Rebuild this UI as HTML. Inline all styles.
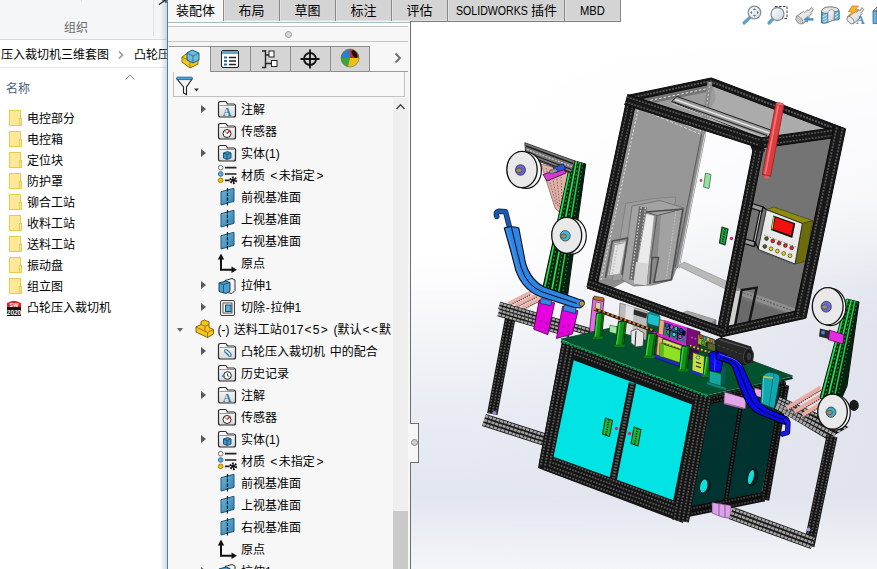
<!DOCTYPE html>
<html lang="zh-CN">
<head>
<meta charset="utf-8">
<title>SolidWorks</title>
<style>
html,body{margin:0;padding:0;}
body{width:877px;height:569px;overflow:hidden;position:relative;background:#fff;font-family:"Liberation Sans","Noto Sans CJK SC",sans-serif;font-size:12px;color:#000;}
.abs{position:absolute;}
#explorer{left:0;top:0;width:167px;height:569px;background:#fff;overflow:hidden;}
#ribbon{left:0;top:0;width:167px;height:39px;background:#f5f6f7;border-bottom:1px solid #dadbdc;}
.vline{width:1px;background:#e2e3e4;top:0;height:36px;}
#addr{left:0;top:40px;width:167px;height:27px;background:#fff;border-bottom:1px solid #e5e5e5;white-space:nowrap;}
.fi{left:7px;height:21px;line-height:21px;white-space:nowrap;font-size:12px;}
.fold{position:absolute;left:2px;top:1px;width:12px;height:16px;background:#ffe896;border:1px solid #e9c94e;box-sizing:border-box;}
.fold:after{content:"";position:absolute;right:-2px;bottom:-1px;width:3px;height:8px;background:#ffe896;border:1px solid #e9c94e;box-sizing:border-box;}
.fi span{position:absolute;left:20px;top:0;}
#sw{left:0;top:0;width:877px;height:569px;overflow:hidden;}
.tab{top:0;height:22px;line-height:21px;font-size:13px;text-align:center;background:#d4d4d4;border-right:1px solid #888;border-bottom:1px solid #7e7e7e;box-sizing:border-box;white-space:nowrap;box-shadow:inset 1px 0 0 #e2e2e2,inset 0 -1px 0 #e0e0e0;}
.tr{position:absolute;left:0;height:22px;line-height:22px;white-space:nowrap;font-size:12px;word-spacing:1.5px;}
.tr .t{position:absolute;top:0;}
.arr{position:absolute;width:0;height:0;border-left:5px solid #5a5a5a;border-top:4px solid transparent;border-bottom:4px solid transparent;top:6px;}
.ic{position:absolute;left:49px;top:1px;overflow:visible;}
.arrd{position:absolute;width:0;height:0;border-top:4px solid #666;border-left:3.5px solid transparent;border-right:3.5px solid transparent;top:9px;}
</style>
</head>
<body>
<!-- ============ Explorer (left) ============ -->
<div id="explorer" class="abs">
  <div id="ribbon" class="abs"></div>
  <div class="abs vline" style="left:81px;height:2px"></div>
  <div class="abs vline" style="left:153px"></div>
  <div class="abs" style="left:64px;top:19px;font-size:12px;color:#6a6a6a;line-height:18px;">组织</div>
  <div id="addr" class="abs"><span class="abs" style="left:1px;top:6px;line-height:18px;">压入裁切机三维套图</span><svg class="abs" style="left:117px;top:10px" width="8" height="10"><path d="M2 1.500 L5.500 5 L2 8.500" fill="none" stroke="#8a8a8a" stroke-width="1.300"/></svg><span class="abs" style="left:134px;top:6px;line-height:18px;">凸轮压入</span></div>
  <div class="abs" style="left:6px;top:80px;color:#4c607a;line-height:18px;">名称</div>
  <svg class="abs" style="left:124px;top:73px" width="12" height="8"><path d="M1.5 6.5 L6 2 L10.5 6.5" fill="none" stroke="#8a8a8a" stroke-width="1"/></svg>
  <div class="abs fi" style="top:109px"><i class="fold"></i><span>电控部分</span></div>
  <div class="abs fi" style="top:130px"><i class="fold"></i><span>电控箱</span></div>
  <div class="abs fi" style="top:151px"><i class="fold"></i><span>定位块</span></div>
  <div class="abs fi" style="top:172px"><i class="fold"></i><span>防护罩</span></div>
  <div class="abs fi" style="top:193px"><i class="fold"></i><span>铆合工站</span></div>
  <div class="abs fi" style="top:214px"><i class="fold"></i><span>收料工站</span></div>
  <div class="abs fi" style="top:235px"><i class="fold"></i><span>送料工站</span></div>
  <div class="abs fi" style="top:256px"><i class="fold"></i><span>振动盘</span></div>
  <div class="abs fi" style="top:277px"><i class="fold"></i><span>组立图</span></div>
  <div class="abs fi" style="top:298px"><svg class="abs" style="left:-1px;top:2px" width="16" height="17"><rect x="1" y="7" width="14" height="9" fill="#111"/><path d="M1 7 L1 3 L6 1 L10 1 L15 3 L15 7Z" fill="#d8232a"/><text x="8" y="15" font-size="6.5" font-weight="bold" fill="#fff" text-anchor="middle" font-family="Liberation Sans,sans-serif">2020</text><text x="8" y="7" font-size="5.5" font-weight="bold" fill="#fff" text-anchor="middle" font-family="Liberation Sans,sans-serif">SW</text></svg><span>凸轮压入裁切机</span></div>
</div>
<!-- ============ SolidWorks window ============ -->
<div class="abs" style="left:160px;top:0;width:7px;height:569px;background:linear-gradient(90deg,rgba(200,200,200,0),rgba(170,170,170,.45));"></div>
<div id="sw" class="abs">
<svg width="0" height="0" style="position:absolute">
<defs>
<linearGradient id="gF" x1="0" y1="0" x2="0" y2="1"><stop offset="0" stop-color="#fdfdfd"/><stop offset="1" stop-color="#d9d9d9"/></linearGradient>
<linearGradient id="gB" x1="0" y1="0" x2="1" y2="1"><stop offset="0" stop-color="#6fb7dc"/><stop offset="1" stop-color="#2f7fae"/></linearGradient>
<g id="iFold"><path d="M1.5 3.5 Q1.5 1.5 3.5 1.5 L8 1.5 Q9.5 1.5 10 3 L10.3 4 L16.5 4 Q18.5 4 18.5 6 L18.5 15 Q18.5 17 16.5 17 L3.5 17 Q1.5 17 1.5 15 Z" fill="url(#gF)" stroke="#2c2c2c" stroke-width="1.2"/><path d="M2.5 5.5 L17.5 5.5" stroke="#9a9a9a" stroke-width="1" fill="none"/></g>
<g id="iPlane"><path d="M3 3.700 L16 0.300 L16 13.300 L3 17 Z" fill="url(#gB)" stroke="#1c5478" stroke-width="1"/><path d="M9.400 0 L9.400 18.500" stroke="#111" stroke-width="1.100" stroke-dasharray="3.500 1.200"/></g>
<g id="iOrigin"><path d="M4 3 L4 16.800 L16 16.800" fill="none" stroke="#111" stroke-width="2"/><path d="M0.800 6.500 L4 0.500 L7.200 6.500 Z" fill="#111"/><path d="M14.500 13.500 L20 16.800 L14.500 20 Z" fill="#111"/></g>
<g id="iMat"><circle cx="3.5" cy="3.5" r="2.2" fill="#fff" stroke="#666" stroke-width=".9"/><circle cx="3.5" cy="9.5" r="2.2" fill="#5db0e6" stroke="#2a6a9a" stroke-width=".9"/><circle cx="3.5" cy="15.5" r="2.2" fill="#f5c400" stroke="#a07800" stroke-width=".9"/><path d="M7.5 3.5 L18.5 3.5 M7.5 9.5 L18.5 9.5 M7.5 15.5 L12 15.5" stroke="#222" stroke-width="1.6"/><circle cx="15.5" cy="15.5" r="2.6" fill="none" stroke="#111" stroke-width="2.2" stroke-dasharray="1.6 1.1"/><circle cx="15.5" cy="15.5" r="1.7" fill="#111"/></g>
</defs></svg>
<!-- viewport -->
<div class="abs" id="vp" style="left:168px;top:0;width:709px;height:569px;background:linear-gradient(0deg,rgba(244,245,249,1) 0%,rgba(244,245,249,0) 13%),linear-gradient(180deg,rgba(255,255,255,1) 5%,rgba(255,255,255,.74) 35%,rgba(255,255,255,.12) 51%,rgba(255,255,255,0) 58%),linear-gradient(90deg,rgba(225,228,237,0) 42%,rgba(225,228,237,1) 100%),linear-gradient(180deg,#ffffff 0%,#ffffff 45%,#f4f5f9 59%,#e9ecf3 72%,#e2e6ef 87%,#e2e6ef 100%);"></div>
<svg class="abs" style="left:0;top:0" width="877" height="569" viewBox="0 0 877 569">
<line x1="508.5" y1="304" x2="531" y2="292.3" stroke="#e8b2aa" stroke-width="4.2" />
<line x1="508.5" y1="306.2" x2="531" y2="294.5" stroke="#5a3a36" stroke-width="1.1" stroke-dasharray="1.3 1"/>
<line x1="515.3" y1="306" x2="537.8" y2="294.3" stroke="#e8b2aa" stroke-width="4.2" />
<line x1="515.3" y1="308.2" x2="537.8" y2="296.5" stroke="#5a3a36" stroke-width="1.1" stroke-dasharray="1.3 1"/>
<line x1="522.1" y1="308" x2="544.6" y2="296.3" stroke="#e8b2aa" stroke-width="4.2" />
<line x1="522.1" y1="310.2" x2="544.6" y2="298.5" stroke="#5a3a36" stroke-width="1.1" stroke-dasharray="1.3 1"/>
<polygon points="541,164 569,171 561,214 555,208" fill="#e0b0aa" stroke="#6a4a46" stroke-width="0.6" stroke-linejoin="round" />
<line x1="546" y1="168" x2="556" y2="204" stroke="#7a4a46" stroke-width="0.8" stroke-dasharray="1.5 1.5"/>
<line x1="551" y1="169" x2="558" y2="206" stroke="#7a4a46" stroke-width="0.8" stroke-dasharray="1.5 1.5"/>
<line x1="556" y1="170" x2="560" y2="208" stroke="#7a4a46" stroke-width="0.8" stroke-dasharray="1.5 1.5"/>
<line x1="561" y1="171" x2="562" y2="210" stroke="#7a4a46" stroke-width="0.8" stroke-dasharray="1.5 1.5"/>
<polygon points="571,160 585.7,164 570,277 567,300 541,296" fill="#08200e" stroke="#041008" stroke-width="1" stroke-linejoin="round" />
<line x1="572" y1="160.3" x2="542.8" y2="296.3" stroke="#25e254" stroke-width="1.7" />
<line x1="573.9" y1="160.8" x2="546.2" y2="296.8" stroke="#1a9a3a" stroke-width="1.3" stroke-dasharray="2 2"/>
<line x1="576.3" y1="161.4" x2="550.4" y2="297.4" stroke="#25e254" stroke-width="1.7" />
<line x1="578.4" y1="162" x2="554" y2="298" stroke="#1a9a3a" stroke-width="1.3" stroke-dasharray="2 2"/>
<line x1="580.4" y1="162.6" x2="557.6" y2="298.6" stroke="#22d04c" stroke-width="1.5" />
<line x1="582.8" y1="163.2" x2="561.8" y2="299.2" stroke="#1a8a6a" stroke-width="1.1" stroke-dasharray="1.5 2.5"/>
<polygon points="524.8,142.7 575,161 571,173.5 526,156.5" fill="#787878" stroke="#222" stroke-width="0.8" stroke-linejoin="round" />
<line x1="526" y1="146" x2="573" y2="163.5" stroke="#1e1e1e" stroke-width="1.4" />
<line x1="527" y1="149.5" x2="572" y2="166.5" stroke="#c8c8c8" stroke-width="1.2" stroke-dasharray="2 1.3"/>
<line x1="527" y1="152.5" x2="571.5" y2="169.5" stroke="#1e1e1e" stroke-width="1.2" />
<line x1="527" y1="155.5" x2="571" y2="172.5" stroke="#1e1e1e" stroke-width="1.2" />
<polygon points="543,174.5 563,168 566,173 547,181" fill="#d63ad0" stroke="#3a0a3a" stroke-width="0.8" stroke-linejoin="round" />
<polygon points="553,167.5 563,164 566,169 556,172.5" fill="#3050d0" stroke="#111" stroke-width="0.6" stroke-linejoin="round" />
<polygon points="549,171 556,168.5 557.5,171.5 550.5,174" fill="#9a9a9a" stroke="#222" stroke-width="0.5" stroke-linejoin="round" />
<ellipse cx="526.2" cy="170.3" rx="15.2" ry="18.2" fill="#f7f7f7" stroke="#111" stroke-width="1.2" />
<ellipse cx="522" cy="169.5" rx="15.2" ry="18.2" fill="#e9e9e9" stroke="#111" stroke-width="1.3" />
<ellipse cx="520.5" cy="170" rx="5" ry="5.3" fill="#6464da" stroke="#333" stroke-width="0.8" />
<ellipse cx="519" cy="170.3" rx="3" ry="2.2" fill="#9a8a7a" stroke="#333" stroke-width="0.5" />
<ellipse cx="571.3" cy="236.1" rx="15" ry="18" fill="#f7f7f7" stroke="#111" stroke-width="1.2" />
<ellipse cx="566.7" cy="235.3" rx="15" ry="18" fill="#e9e9e9" stroke="#111" stroke-width="1.3" />
<ellipse cx="565.2" cy="235.8" rx="5" ry="5.2" fill="#3cc0d2" stroke="#333" stroke-width="0.8" />
<ellipse cx="563.7" cy="236.1" rx="3" ry="2.2" fill="#9a8a7a" stroke="#333" stroke-width="0.5" />
<line x1="484" y1="420" x2="546" y2="440" stroke="#1c1c1c" stroke-width="12.5" stroke-linecap="butt"/>
<line x1="485.3" y1="416" x2="547.3" y2="436" stroke="#a4a4a4" stroke-width="2.380952380952381" stroke-dasharray="3.2 0.7" opacity="1"/>
<line x1="484" y1="420" x2="546" y2="440" stroke="#a4a4a4" stroke-width="2.380952380952381" stroke-dasharray="3.2 0.7" opacity="1"/>
<line x1="482.7" y1="424" x2="544.7" y2="444" stroke="#a4a4a4" stroke-width="2.380952380952381" stroke-dasharray="3.2 0.7" opacity="1"/>
<line x1="510.3" y1="318" x2="492.3" y2="414" stroke="#141414" stroke-width="10.5" stroke-linecap="butt"/>
<line x1="513.7" y1="318.6" x2="495.7" y2="414.6" stroke="#585858" stroke-width="1.5909090909090908" stroke-dasharray="1.7 1.3" opacity="1"/>
<line x1="510.3" y1="318" x2="492.3" y2="414" stroke="#585858" stroke-width="1.5909090909090908" stroke-dasharray="1.7 1.3" opacity="1"/>
<line x1="506.9" y1="317.4" x2="488.9" y2="413.4" stroke="#585858" stroke-width="1.5909090909090908" stroke-dasharray="1.7 1.3" opacity="1"/>
<ellipse cx="494.5" cy="413" rx="2" ry="2" fill="#8a8ad8" />
<line x1="499.3" y1="305.3" x2="590" y2="332" stroke="#1c1c1c" stroke-width="7.6" stroke-linecap="butt"/>
<line x1="499.8" y1="303.5" x2="590.5" y2="330.2" stroke="#a4a4a4" stroke-width="2.1714285714285713" stroke-dasharray="3.2 0.7" opacity="1"/>
<line x1="498.8" y1="307.1" x2="589.5" y2="333.8" stroke="#a4a4a4" stroke-width="2.1714285714285713" stroke-dasharray="3.2 0.7" opacity="1"/>
<line x1="498.5" y1="312.6" x2="570" y2="333.7" stroke="#1c1c1c" stroke-width="7.6" stroke-linecap="butt"/>
<line x1="499" y1="310.8" x2="570.5" y2="331.9" stroke="#a4a4a4" stroke-width="2.1714285714285713" stroke-dasharray="3.2 0.7" opacity="1"/>
<line x1="498" y1="314.4" x2="569.5" y2="335.5" stroke="#a4a4a4" stroke-width="2.1714285714285713" stroke-dasharray="3.2 0.7" opacity="1"/>
<path d="M496.8 216.5 Q495 211.8 499 211.3 L505.6 211.8 L509.8 228.5" fill="none" stroke="#0d2f6a" stroke-width="5.4" stroke-linecap="round" stroke-linejoin="round"/>
<path d="M496.8 216.5 Q495 211.8 499 211.3 L505.6 211.8 L509.8 228.5" fill="none" stroke="#1f58a8" stroke-width="3.6" stroke-linecap="round" stroke-linejoin="round"/>
<path d="M504.3 228 L510.5 250 L516 271 Q519 279 523.4 284.4 Q527 289 532 292.4 Q536 295 540.6 296.7 L573.8 307.2 L580 308 Q586 305 583.5 300.5 L578.7 299.2 L544.3 286.9 Q540 285 536.9 282 Q533 278.5 530.7 274.6 Q527.3 269.5 525.6 263.5 L523 250 L518.8 228 Q511.5 225.5 504.3 228 Z" fill="#2d86e6" stroke="#0a0a18" stroke-width="1.1" stroke-linejoin="round"/>
<path d="M511.5 227.5 L516.8 250 L521 267 Q524 277 529.5 283 Q534.5 288.5 542 291.8 L577 303.5" fill="none" stroke="#0a0a18" stroke-width="1" />
<path d="M506.5 229 L512.5 250 L518 271 Q521 279 525 284" fill="none" stroke="#4a9af0" stroke-width="1" />
<ellipse cx="581.8" cy="303.6" rx="2.6" ry="2.6" fill="#b89a3a" stroke="#3a2a00" stroke-width="0.7" />
<polygon points="539.2,300.3 554.6,302.8 547.8,334.7 533.7,329.2" fill="#e600e0" stroke="#3a003a" stroke-width="0.8" stroke-linejoin="round" />
<polygon points="562.6,306.4 578,310.8 572.4,334 556.4,338.4" fill="#e600e0" stroke="#3a003a" stroke-width="0.8" stroke-linejoin="round" />
<polygon points="541,298.5 551.5,300.5 551,305.5 540,303.5" fill="#3a86e0" stroke="#0d2a66" stroke-width="0.7" stroke-linejoin="round" />
<polygon points="564,305 576,308 575.5,313.5 563,310.5" fill="#3a86e0" stroke="#0d2a66" stroke-width="0.7" stroke-linejoin="round" />
<ellipse cx="540.5" cy="321" rx="0.9" ry="0.9" fill="#7a007a" />
<ellipse cx="546.5" cy="323" rx="0.9" ry="0.9" fill="#7a007a" />
<ellipse cx="539.5" cy="327.5" rx="0.9" ry="0.9" fill="#7a007a" />
<ellipse cx="545.5" cy="329.5" rx="0.9" ry="0.9" fill="#7a007a" />
<ellipse cx="563" cy="327" rx="0.9" ry="0.9" fill="#7a007a" />
<ellipse cx="569" cy="325.5" rx="0.9" ry="0.9" fill="#7a007a" />
<ellipse cx="562" cy="333" rx="0.9" ry="0.9" fill="#7a007a" />
<ellipse cx="568" cy="331.5" rx="0.9" ry="0.9" fill="#7a007a" />
<polygon points="705,398 785,381 772,440 762,492 690,507" fill="#013431" />
<line x1="685" y1="512.5" x2="764" y2="496.5" stroke="#0e0e0e" stroke-width="10" stroke-linecap="butt"/>
<line x1="684.5" y1="510" x2="763.5" y2="494" stroke="#3c3c3c" stroke-width="1.923076923076923" stroke-dasharray="1.7 1.3" opacity="1"/>
<line x1="685.5" y1="515" x2="764.5" y2="499" stroke="#3c3c3c" stroke-width="1.923076923076923" stroke-dasharray="1.7 1.3" opacity="1"/>
<line x1="785" y1="385" x2="765" y2="500" stroke="#0e0e0e" stroke-width="8.5" stroke-linecap="butt"/>
<line x1="787.1" y1="385.4" x2="767.1" y2="500.4" stroke="#3c3c3c" stroke-width="1.6346153846153846" stroke-dasharray="1.7 1.3" opacity="1"/>
<line x1="782.9" y1="384.6" x2="762.9" y2="499.6" stroke="#3c3c3c" stroke-width="1.6346153846153846" stroke-dasharray="1.7 1.3" opacity="1"/>
<line x1="741" y1="404" x2="726" y2="500" stroke="#0e0e0e" stroke-width="4.5" stroke-linecap="butt"/>
<line x1="741" y1="404" x2="726" y2="500" stroke="#3c3c3c" stroke-width="1.7307692307692306" stroke-dasharray="1.7 1.3" opacity="1"/>
<line x1="708" y1="401" x2="786" y2="384" stroke="#0e0e0e" stroke-width="7" stroke-linecap="butt"/>
<line x1="707.6" y1="399.3" x2="785.6" y2="382.3" stroke="#3c3c3c" stroke-width="1.346153846153846" stroke-dasharray="1.7 1.3" opacity="1"/>
<line x1="708.4" y1="402.7" x2="786.4" y2="385.7" stroke="#3c3c3c" stroke-width="1.346153846153846" stroke-dasharray="1.7 1.3" opacity="1"/>
<ellipse cx="705" cy="486" rx="5.2" ry="7.8" fill="#062222" stroke="#041818" stroke-width="0.8" transform="rotate(12 705 486.0)" />
<ellipse cx="703.8" cy="486" rx="3.6" ry="6.6" fill="#14dcdc" transform="rotate(12 703.8 486.0)" />
<ellipse cx="752.6" cy="477.3" rx="5" ry="8.8" fill="#062222" stroke="#041818" stroke-width="0.8" transform="rotate(14 752.6 477.3)" />
<ellipse cx="751" cy="477" rx="2.6" ry="7.2" fill="#14dcdc" transform="rotate(14 751 477.0)" />
<polygon points="562,341 711,396 683,523 538,468" fill="#161616" />
<polygon points="573.7,360.3 692,404.5 673,501.5 553,458.5" fill="#02e4e4" />
<line x1="632.5" y1="383" x2="613" y2="480" stroke="#141414" stroke-width="7.5" stroke-linecap="butt"/>
<line x1="632.5" y1="383" x2="613" y2="480" stroke="#585858" stroke-width="3.4090909090909087" stroke-dasharray="1.7 1.3" opacity="1"/>
<polygon points="605.5,418 612.5,420.5 609.5,436.5 602.5,434" fill="#22b43a" stroke="#083a12" stroke-width="1.1" stroke-linejoin="round" />
<polygon points="634,427 641,429.5 638,446 631,443.5" fill="#22b43a" stroke="#083a12" stroke-width="1.1" stroke-linejoin="round" />
<line x1="609" y1="419.5" x2="606" y2="435" stroke="#083a12" stroke-width="1.6" stroke-dasharray="1.2 1.2"/>
<line x1="637.5" y1="428.5" x2="634.5" y2="444.5" stroke="#083a12" stroke-width="1.6" stroke-dasharray="1.2 1.2"/>
<ellipse cx="616.5" cy="428.5" rx="1.7" ry="1.7" fill="#e8205a" />
<ellipse cx="629.5" cy="433.5" rx="1.7" ry="1.7" fill="#e8205a" />
<line x1="567" y1="347.5" x2="702" y2="398" stroke="#141414" stroke-width="11" stroke-linecap="butt"/>
<line x1="568.3" y1="344.1" x2="703.3" y2="394.6" stroke="#585858" stroke-width="1.6666666666666665" stroke-dasharray="1.7 1.3" opacity="1"/>
<line x1="567" y1="347.5" x2="702" y2="398" stroke="#585858" stroke-width="1.6666666666666665" stroke-dasharray="1.7 1.3" opacity="1"/>
<line x1="565.7" y1="350.9" x2="700.7" y2="401.4" stroke="#585858" stroke-width="1.6666666666666665" stroke-dasharray="1.7 1.3" opacity="1"/>
<line x1="546" y1="462.5" x2="681" y2="511.5" stroke="#141414" stroke-width="16" stroke-linecap="butt"/>
<line x1="548" y1="456.9" x2="683" y2="505.9" stroke="#585858" stroke-width="1.8181818181818181" stroke-dasharray="1.7 1.3" opacity="1"/>
<line x1="546.7" y1="460.6" x2="681.7" y2="509.6" stroke="#585858" stroke-width="1.8181818181818181" stroke-dasharray="1.7 1.3" opacity="1"/>
<line x1="545.3" y1="464.4" x2="680.3" y2="513.4" stroke="#585858" stroke-width="1.8181818181818181" stroke-dasharray="1.7 1.3" opacity="1"/>
<line x1="544" y1="468.1" x2="679" y2="517.1" stroke="#585858" stroke-width="1.8181818181818181" stroke-dasharray="1.7 1.3" opacity="1"/>
<line x1="568.5" y1="343" x2="545" y2="466" stroke="#141414" stroke-width="13" stroke-linecap="butt"/>
<line x1="572.8" y1="343.8" x2="549.3" y2="466.8" stroke="#585858" stroke-width="1.9696969696969695" stroke-dasharray="1.7 1.3" opacity="1"/>
<line x1="568.5" y1="343" x2="545" y2="466" stroke="#585858" stroke-width="1.9696969696969695" stroke-dasharray="1.7 1.3" opacity="1"/>
<line x1="564.2" y1="342.2" x2="540.7" y2="465.2" stroke="#585858" stroke-width="1.9696969696969695" stroke-dasharray="1.7 1.3" opacity="1"/>
<line x1="703.5" y1="396" x2="680.5" y2="521" stroke="#141414" stroke-width="17" stroke-linecap="butt"/>
<line x1="709.8" y1="397.2" x2="686.8" y2="522.2" stroke="#585858" stroke-width="1.9318181818181817" stroke-dasharray="1.7 1.3" opacity="1"/>
<line x1="705.6" y1="396.4" x2="682.6" y2="521.4" stroke="#585858" stroke-width="1.9318181818181817" stroke-dasharray="1.7 1.3" opacity="1"/>
<line x1="701.4" y1="395.6" x2="678.4" y2="520.6" stroke="#585858" stroke-width="1.9318181818181817" stroke-dasharray="1.7 1.3" opacity="1"/>
<line x1="697.2" y1="394.8" x2="674.2" y2="519.8" stroke="#585858" stroke-width="1.9318181818181817" stroke-dasharray="1.7 1.3" opacity="1"/>
<polygon points="725,393 745,399 744,409 724,404" fill="#e3a6e6" stroke="#6a3a6a" stroke-width="0.6" stroke-linejoin="round" />
<polygon points="712,502.5 731,505.5 731,518.5 722,517 712,513" fill="#dca2e8" stroke="#5a2a5a" stroke-width="0.6" stroke-linejoin="round" />
<line x1="719" y1="503.5" x2="719" y2="516" stroke="#8a5a9a" stroke-width="1" />
<line x1="725" y1="504.5" x2="725" y2="517.5" stroke="#8a5a9a" stroke-width="1" />
<polygon points="779.5,396.6 848.4,426.9 827.3,439.5 775.3,408.6" fill="#1a1a1a" />
<line x1="779" y1="398.2" x2="845.7" y2="428.5" stroke="#a4a4a4" stroke-width="2.108" stroke-dasharray="3.2 0.7"/>
<line x1="777.9" y1="401.2" x2="840.4" y2="431.7" stroke="#a4a4a4" stroke-width="2.508" stroke-dasharray="3.2 0.7"/>
<line x1="776.9" y1="404.2" x2="835.1" y2="434.8" stroke="#a4a4a4" stroke-width="2.908" stroke-dasharray="3.2 0.7"/>
<line x1="775.8" y1="407" x2="830" y2="437.9" stroke="#a4a4a4" stroke-width="3.292" stroke-dasharray="3.2 0.7"/>
<line x1="787" y1="408.3" x2="821" y2="387.8" stroke="#e8aca4" stroke-width="4.6" />
<line x1="787" y1="410.7" x2="821" y2="390.2" stroke="#5a3a36" stroke-width="1.2" stroke-dasharray="1.3 1"/>
<line x1="794.5" y1="412" x2="824" y2="394" stroke="#e8aca4" stroke-width="4.6" />
<line x1="794.5" y1="414.4" x2="824" y2="396.4" stroke="#5a3a36" stroke-width="1.2" stroke-dasharray="1.3 1"/>
<line x1="802.5" y1="415.3" x2="826.5" y2="400.6" stroke="#e8aca4" stroke-width="4.6" />
<line x1="802.5" y1="417.7" x2="826.5" y2="403" stroke="#5a3a36" stroke-width="1.2" stroke-dasharray="1.3 1"/>
<line x1="832" y1="436" x2="809" y2="546" stroke="#141414" stroke-width="11" stroke-linecap="butt"/>
<line x1="835.6" y1="436.8" x2="812.6" y2="546.8" stroke="#585858" stroke-width="1.6666666666666665" stroke-dasharray="1.7 1.3" opacity="1"/>
<line x1="832" y1="436" x2="809" y2="546" stroke="#585858" stroke-width="1.6666666666666665" stroke-dasharray="1.7 1.3" opacity="1"/>
<line x1="828.4" y1="435.2" x2="805.4" y2="545.2" stroke="#585858" stroke-width="1.6666666666666665" stroke-dasharray="1.7 1.3" opacity="1"/>
<line x1="731" y1="513" x2="813" y2="543" stroke="#1c1c1c" stroke-width="13" stroke-linecap="butt"/>
<line x1="732.5" y1="508.9" x2="814.5" y2="538.9" stroke="#a4a4a4" stroke-width="2.4761904761904763" stroke-dasharray="3.2 0.7" opacity="1"/>
<line x1="731" y1="513" x2="813" y2="543" stroke="#a4a4a4" stroke-width="2.4761904761904763" stroke-dasharray="3.2 0.7" opacity="1"/>
<line x1="729.5" y1="517.1" x2="811.5" y2="547.1" stroke="#a4a4a4" stroke-width="2.4761904761904763" stroke-dasharray="3.2 0.7" opacity="1"/>
<ellipse cx="808.5" cy="529.5" rx="2" ry="2" fill="#9a9ae0" />
<polygon points="846.5,299 859,302 847,386 840,402 820,398" fill="#08200e" stroke="#041008" stroke-width="1" stroke-linejoin="round" />
<line x1="847.5" y1="299.2" x2="821.6" y2="398.3" stroke="#25e254" stroke-width="1.7" />
<line x1="849.2" y1="299.7" x2="824.4" y2="398.9" stroke="#1a9a3a" stroke-width="1.3" stroke-dasharray="2 2"/>
<line x1="851.2" y1="300.1" x2="827.6" y2="399.5" stroke="#25e254" stroke-width="1.7" />
<line x1="853.1" y1="300.6" x2="830.6" y2="400.1" stroke="#1a9a3a" stroke-width="1.3" stroke-dasharray="2 2"/>
<line x1="855" y1="301" x2="833.6" y2="400.7" stroke="#22d04c" stroke-width="1.5" />
<line x1="857.1" y1="301.6" x2="837" y2="401.4" stroke="#1a8a6a" stroke-width="1.1" stroke-dasharray="1.5 2.5"/>
<polygon points="829,330 844,334.5 843,344 828,339.5" fill="#e62ae0" stroke="#4a004a" stroke-width="0.7" stroke-linejoin="round" />
<polygon points="820,328.5 830,331 829,339 819,336.5" fill="#2a2a2a" />
<ellipse cx="823" cy="332.5" rx="2" ry="2" fill="#4a7ae0" />
<ellipse cx="830.5" cy="307" rx="15.4" ry="18.6" fill="#f7f7f7" stroke="#111" stroke-width="1.2" />
<ellipse cx="827.7" cy="306.2" rx="15.4" ry="18.6" fill="#e9e9e9" stroke="#111" stroke-width="1.3" />
<ellipse cx="826.2" cy="306.7" rx="5.1" ry="5.4" fill="#6a6ae0" stroke="#333" stroke-width="0.8" />
<ellipse cx="824.7" cy="307" rx="3.1" ry="2.2" fill="#9a8a7a" stroke="#333" stroke-width="0.5" />
<ellipse cx="854" cy="405.4" rx="4.8" ry="5.6" fill="#1a1a1a" />
<ellipse cx="835.5" cy="412.5" rx="14.8" ry="17.5" fill="#f7f7f7" stroke="#111" stroke-width="1.2" />
<ellipse cx="832.5" cy="411.7" rx="14.8" ry="17.5" fill="#e9e9e9" stroke="#111" stroke-width="1.3" />
<ellipse cx="831" cy="412.2" rx="4.9" ry="5.1" fill="#38b0c8" stroke="#333" stroke-width="0.8" />
<ellipse cx="829.5" cy="412.5" rx="3" ry="2.1" fill="#9a8a7a" stroke="#333" stroke-width="0.5" />
<polygon points="561,339 708,394.5 792.5,376 645,320.5" fill="#01522e" stroke="#083a22" stroke-width="0.8" stroke-linejoin="round" />
<path d="M708 396.300 L792.500 377.800" fill="none" stroke="#02301c" stroke-width="2.4" />
<path d="M561 340.800 L708 396.300" fill="none" stroke="#0a9a54" stroke-width="2.4" />
<path d="M561 341.600 L708 397.100" fill="none" stroke="#03140c" stroke-width="1.2" stroke-dasharray="1.5 2.5"/>
<polygon points="680.5,314 687,311 716,320 716,329 709,331 680.5,322" fill="#808080" stroke="#5a5a5a" stroke-width="0.6" stroke-linejoin="round" />
<polygon points="680.5,314 687,311 716,320 709,323" fill="#a4a4a4" />
<polygon points="620,303 648,312 646,340 618,331" fill="#bcbcbc" stroke="#6a6a6a" stroke-width="0.7" stroke-linejoin="round" />
<polygon points="626,305 634,307.5 632,335.5 624,333" fill="#e2e2e2" />
<polygon points="634,309.5 647,313.5 646.5,318.5 633.5,314.5" fill="#2a2a2a" />
<polygon points="648,313 660,316.5 659,327 647,323.5" fill="#1cc0c8" stroke="#0a4a50" stroke-width="0.8" stroke-linejoin="round" />
<polygon points="650,311 659,313.5 660,316.5 648,313" fill="#0e8a92" />
<polygon points="593,297.5 604,299.5 600.5,333 589.5,331" fill="#e070e2" stroke="#4a0a4a" stroke-width="0.8" stroke-linejoin="round" />
<polygon points="594,296 604,298 603.5,301.5 593.5,299.5" fill="#c06a20" stroke="#222" stroke-width="0.6" stroke-linejoin="round" />
<polygon points="596,302 601,303 600,311 595,310" fill="#d8d8a0" stroke="#333" stroke-width="0.5" stroke-linejoin="round" />
<polygon points="610,325 617,327 616.5,334 609.5,332" fill="#a6e8a6" stroke="#2a5a2a" stroke-width="0.6" stroke-linejoin="round" />
<polygon points="631,331 637,329 644,333 643,346 636,347 631,343" fill="#e6e6e6" stroke="#333" stroke-width="0.7" stroke-linejoin="round" />
<line x1="636" y1="331" x2="635" y2="346" stroke="#222" stroke-width="1" />
<polygon points="664,321 687,328.5 686,345.5 663,338" fill="#3c6f92" stroke="#111" stroke-width="0.7" stroke-linejoin="round" />
<ellipse cx="667" cy="325" rx="2" ry="2.2" fill="#2a5ae0" stroke="#0a0a0a" stroke-width="0.7" />
<ellipse cx="671.5" cy="327" rx="2" ry="2.2" fill="#e040e0" stroke="#0a0a0a" stroke-width="0.7" />
<ellipse cx="676" cy="328.5" rx="2" ry="2.2" fill="#20c8c8" stroke="#0a0a0a" stroke-width="0.7" />
<ellipse cx="681" cy="330.5" rx="2" ry="2.2" fill="#2a2ad0" stroke="#0a0a0a" stroke-width="0.7" />
<ellipse cx="668.5" cy="332" rx="2" ry="2.2" fill="#30c060" stroke="#0a0a0a" stroke-width="0.7" />
<ellipse cx="674" cy="334.5" rx="2" ry="2.2" fill="#40d0e0" stroke="#0a0a0a" stroke-width="0.7" />
<ellipse cx="680" cy="336.5" rx="2" ry="2.2" fill="#c040c0" stroke="#0a0a0a" stroke-width="0.7" />
<ellipse cx="684" cy="333" rx="2" ry="2.2" fill="#111" stroke="#0a0a0a" stroke-width="0.7" />
<path d="M666 329 L685 335.500 M670 322.500 L669 339.500 M678 325.500 L677 342" fill="none" stroke="#0a0a0a" stroke-width="0.9" />
<polygon points="659.7,319.5 664.6,321 661,357.5 656,356" fill="#e8a878" stroke="#4a2a10" stroke-width="0.6" stroke-linejoin="round" />
<path d="M664 321 L687 328.500 L686 346 L684.500 364" fill="none" stroke="#e818dc" stroke-width="2.2" stroke-linejoin="miter"/>
<path d="M652.700 332.400 L686 345" fill="none" stroke="#e818dc" stroke-width="2.6" />
<path d="M653 334.200 L686 346.800" fill="none" stroke="#3a0a3a" stroke-width="0.8" />
<polygon points="662,341 683,348.5 682.5,352 661.5,344.5" fill="#2a2a10" />
<line x1="662.5" y1="342.5" x2="682.5" y2="349.8" stroke="#d8d040" stroke-width="1.4" stroke-dasharray="2 1.5"/>
<polygon points="686.5,345 699,349 698.5,362 686,358" fill="#3c0a4c" />
<polygon points="687.5,328 700,332 699,349 686.5,345" fill="#7a0a7a" stroke="#2a002a" stroke-width="0.7" stroke-linejoin="round" />
<ellipse cx="692" cy="337.5" rx="0.9" ry="0.9" fill="#c050c0" />
<ellipse cx="695.5" cy="338.7" rx="0.9" ry="0.9" fill="#c050c0" />
<polygon points="698,334 714.5,339.5 714,349.5 697.5,344" fill="#8fb030" stroke="#1a2a00" stroke-width="0.7" stroke-linejoin="round" />
<polygon points="700,334.5 702.4,335.3 702.1,339.1 699.7,338.3" fill="#e04040" stroke="#111" stroke-width="0.5" stroke-linejoin="round" />
<polygon points="703.5,336 705.9,336.8 705.6,340.6 703.2,339.8" fill="#40a0e0" stroke="#111" stroke-width="0.5" stroke-linejoin="round" />
<polygon points="707,337 709.4,337.8 709.1,341.6 706.7,340.8" fill="#e0e040" stroke="#111" stroke-width="0.5" stroke-linejoin="round" />
<polygon points="710.5,338.5 712.9,339.3 712.6,343.1 710.2,342.3" fill="#e060c0" stroke="#111" stroke-width="0.5" stroke-linejoin="round" />
<polygon points="702,340.5 704.4,341.3 704.1,345.1 701.7,344.3" fill="#40c040" stroke="#111" stroke-width="0.5" stroke-linejoin="round" />
<polygon points="706,342 708.4,342.8 708.1,346.6 705.7,345.8" fill="#202020" stroke="#111" stroke-width="0.5" stroke-linejoin="round" />
<polygon points="710,343.5 712.4,344.3 712.1,348.1 709.7,347.3" fill="#3a3ae0" stroke="#111" stroke-width="0.5" stroke-linejoin="round" />
<polygon points="707.5,342 716,345 715.5,352 707,349" fill="#55652c" stroke="#1a1a0a" stroke-width="0.6" stroke-linejoin="round" />
<polygon points="654,354 681,363.5 680.5,367 653.5,357.5" fill="#1e2ac8" stroke="#0a0a5a" stroke-width="0.6" stroke-linejoin="round" />
<polygon points="660,343 681,350 680.5,363 659.5,356" fill="#8de024" stroke="#2a4a00" stroke-width="0.7" stroke-linejoin="round" />
<polygon points="660,343 664,344.3 663.5,357.3 659.5,356" fill="#5ab81a" />
<polygon points="663,339 684,346.5 683.5,350 662.5,342.5" fill="#d8e060" stroke="#333" stroke-width="0.5" stroke-linejoin="round" />
<polygon points="693,352.5 704.5,356.5 703.5,374.5 692,370.5" fill="#c6e044" stroke="#3a4a00" stroke-width="0.7" stroke-linejoin="round" />
<polygon points="691,370 704,374.5 703.5,377 690.5,372.5" fill="#1e2ac8" />
<path d="M696 362 L701 363.700 M696 366 L701 367.700" fill="none" stroke="#222" stroke-width="1.2" />
<ellipse cx="698" cy="357.5" rx="2" ry="1.6" fill="#a0e8b0" stroke="#222" stroke-width="0.5" />
<line x1="594" y1="309" x2="654" y2="331" stroke="#1a1a1a" stroke-width="3.4" />
<line x1="594" y1="308.6" x2="654" y2="330.6" stroke="#e87a1e" stroke-width="2.2" stroke-dasharray="2.4 2.2"/>
<line x1="689.5" y1="346" x2="710" y2="353" stroke="#2a2a2a" stroke-width="3.2" />
<line x1="689.5" y1="345.6" x2="710" y2="352.6" stroke="#d8c030" stroke-width="2" stroke-dasharray="2 2"/>
<polygon points="596.5,313 604,313 601.5,338 594,338" fill="#12921a" stroke="#042a06" stroke-width="0.9" stroke-linejoin="round" />
<line x1="597.7" y1="314" x2="595.2" y2="337" stroke="#3ad840" stroke-width="1.3" />
<line x1="602.5" y1="314" x2="600" y2="337" stroke="#0a5a0e" stroke-width="1.6" />
<polygon points="592.5,336.5 603,336.5 602.5,339 593,339" fill="#0f7a14" />
<polygon points="618.5,321.5 626.5,321.5 623.5,346 615.5,346" fill="#12921a" stroke="#042a06" stroke-width="0.9" stroke-linejoin="round" />
<line x1="619.7" y1="322.5" x2="616.7" y2="345" stroke="#3ad840" stroke-width="1.3" />
<line x1="625" y1="322.5" x2="622" y2="345" stroke="#0a5a0e" stroke-width="1.6" />
<polygon points="614,344.5 625,344.5 624.5,347 614.5,347" fill="#0f7a14" />
<polygon points="648,333.5 656.5,333.5 653.5,357 645,357" fill="#12921a" stroke="#042a06" stroke-width="0.9" stroke-linejoin="round" />
<line x1="649.2" y1="334.5" x2="646.2" y2="356" stroke="#3ad840" stroke-width="1.3" />
<line x1="655" y1="334.5" x2="652" y2="356" stroke="#0a5a0e" stroke-width="1.6" />
<polygon points="643.5,355.5 655,355.5 654.5,358 644,358" fill="#0f7a14" />
<polygon points="682,346 690,346 687,370.5 679,370.5" fill="#12921a" stroke="#042a06" stroke-width="0.9" stroke-linejoin="round" />
<line x1="683.2" y1="347" x2="680.2" y2="369.5" stroke="#3ad840" stroke-width="1.3" />
<line x1="688.5" y1="347" x2="685.5" y2="369.5" stroke="#0a5a0e" stroke-width="1.6" />
<polygon points="677.5,369 688.5,369 688,371.5 678,371.5" fill="#0f7a14" />
<polygon points="705.5,356 711.5,356 709,376 703,376" fill="#12921a" stroke="#042a06" stroke-width="0.9" stroke-linejoin="round" />
<line x1="706.7" y1="357" x2="704.2" y2="375" stroke="#3ad840" stroke-width="1.3" />
<line x1="710" y1="357" x2="707.5" y2="375" stroke="#0a5a0e" stroke-width="1.6" />
<polygon points="701.5,374.5 710.5,374.5 710,377 702,377" fill="#0f7a14" />
<polygon points="715,340.5 721,337.5 751,347 753,362 744.3,364.8 716.6,351" fill="#262626" stroke="#0a0a0a" stroke-width="0.8" stroke-linejoin="round" />
<line x1="719" y1="339.5" x2="750" y2="349" stroke="#5a5a5a" stroke-width="1.2" />
<line x1="718" y1="345.5" x2="746" y2="356" stroke="#4a4a4a" stroke-width="1" stroke-dasharray="2.5 2"/>
<ellipse cx="748.5" cy="356.4" rx="5" ry="8" fill="#1a1a1a" stroke="#4a4a4a" stroke-width="0.8" transform="rotate(8 748.5 356.4)" />
<ellipse cx="749" cy="356.4" rx="2.2" ry="3.6" fill="#3a3a3a" />
<polygon points="720.6,366 726,367.5 725.5,384.5 720.5,383" fill="#0a5a54" />
<polygon points="709.5,370.6 721.4,374 721,386 709,382.5" fill="#14a89c" stroke="#064a44" stroke-width="0.7" stroke-linejoin="round" />
<polygon points="707,382 726,388 725.5,390 706.5,384" fill="#0c8a80" />
<polygon points="724.5,392 746,398.5 745.5,408.5 724,403" fill="#e3a6e6" stroke="#6a3a6a" stroke-width="0.6" stroke-linejoin="round" />
<polygon points="754.6,388 761.7,390 761.5,397.5 754.4,395.5" fill="#e3a6e6" stroke="#6a3a6a" stroke-width="0.5" stroke-linejoin="round" />
<polygon points="708.7,353.2 715.8,350.8 727,354.5 723.7,356.4 720.6,372.2 710.3,370.6" fill="#0c0cf0" stroke="#050510" stroke-width="0.8" stroke-linejoin="round" />
<line x1="715.5" y1="352.5" x2="714.5" y2="370.5" stroke="#4a4af8" stroke-width="1" />
<path d="M715.8 352.4 L734 358.7 Q739 361 742 365 L752.2 387.2 Q756 396.5 760 402.2 Q764 407 769.6 409.4 L787.8 417.3 L789.5 421 L786 424.5 L782.3 423.6 L766.5 417.3 Q758.5 414.5 753.8 411 Q749 407 745.9 401.5 L738 382.5 L732.4 366.6 Q730 363 725.3 361.9 L716 359 Z" fill="#0a0af0" stroke="#050510" stroke-width="1.1" stroke-linejoin="round"/>
<path d="M720 357 L732 361.200 Q736 363 738 368 L748 393 Q752 403 757.500 407.500 Q762 411.500 768 413.500 L785 420.500" fill="none" stroke="#050510" stroke-width="1" />
<path d="M719 353.800 L734 359.200 Q739 361.500 741.500 365.500" fill="none" stroke="#5a5afa" stroke-width="1" />
<path d="M785.500 420 L788 422.500 L787.500 432.500 L782.500 434" fill="none" stroke="#04045a" stroke-width="5.2" stroke-linejoin="round" stroke-linecap="round"/>
<path d="M785.500 420 L788 422.500 L787.500 432.500 L782.500 434" fill="none" stroke="#1a1ae8" stroke-width="3.4" stroke-linejoin="round" stroke-linecap="round"/>
<path d="M762.500 377 Q765 372.500 769 372 L776 373.500 Q780 374.500 780 378 L774.400 408.600 L761 403.500 Z" fill="#12a8b0" stroke="#063c40" stroke-width="0.8" />
<path d="M773.500 374 L769 406.500" fill="none" stroke="#0a7a82" stroke-width="1" />
<path d="M763.500 378 L762.300 402" fill="none" stroke="#4cd0d8" stroke-width="1.2" />
<path d="M763 376.800 L773 377.800" fill="none" stroke="#d8b820" stroke-width="1.8" />
<polygon points="627.5,95.5 711.5,78 845,128.5 760,149.5" fill="#ababab" />
<polygon points="627.5,95.5 711.5,78 716,98 700,131" fill="#9c9c9c" />
<polygon points="632,98 710,81.8 709,91.5 656,102.5 645,101.5" fill="#747474" />
<line x1="646" y1="101.3" x2="708.5" y2="88.3" stroke="#e6e6e6" stroke-width="1" stroke-dasharray="2.5 2"/>
<polygon points="760,149.5 845,128.5 805,319 721.5,336.5" fill="#747474" />
<polygon points="733,296 800,318 722,336" fill="#6a6a6a" />
<polygon points="737,287.5 801,310.5 799,316.5 735,293.5" fill="#8e8e8e" />
<line x1="737" y1="290.5" x2="800" y2="313.5" stroke="#5a5a5a" stroke-width="1" stroke-dasharray="2 1.5"/>
<polygon points="736,291 742,290 735.5,325 727,327" fill="#cfcfcf" />
<polygon points="630,100 704,133 677,268 673,278 632,278 613,288 590,287" fill="#979797" />
<polygon points="596,280 632,277 613,288 592,287" fill="#8c8c8c" />
<polygon points="627.5,95.4 711.5,77.9 712.7,83.8 628.7,101.3" fill="#181818" />
<line x1="627.5" y1="95.4" x2="711.5" y2="77.9" stroke="#0a0a0a" stroke-width="1" />
<line x1="628.7" y1="101.3" x2="712.7" y2="83.8" stroke="#0a0a0a" stroke-width="1" />
<line x1="628.1" y1="98.3" x2="712.1" y2="80.8" stroke="#555" stroke-width="1.7647058823529411" stroke-dasharray="2 1.2"/>
<polygon points="711.5,78 845.6,128.8 843.1,135.3 709,84.5" fill="#181818" />
<line x1="711.5" y1="78" x2="845.6" y2="128.8" stroke="#0a0a0a" stroke-width="1" />
<line x1="709" y1="84.5" x2="843.1" y2="135.3" stroke="#0a0a0a" stroke-width="1" />
<line x1="710.3" y1="81.3" x2="844.4" y2="132.1" stroke="#555" stroke-width="2.058823529411765" stroke-dasharray="2 1.2"/>
<line x1="710" y1="82" x2="703" y2="134" stroke="#8a8a8a" stroke-width="5" />
<line x1="710" y1="82" x2="703" y2="134" stroke="#c8c8c8" stroke-width="1" stroke-dasharray="2 2"/>
<line x1="703.5" y1="134" x2="677" y2="268" stroke="#8d8d8d" stroke-width="5" />
<line x1="705" y1="134" x2="678.5" y2="268" stroke="#d8d8d8" stroke-width="1" />
<line x1="701.5" y1="134" x2="675" y2="268" stroke="#5a5a5a" stroke-width="1" />
<line x1="638" y1="110" x2="601" y2="280" stroke="#e8e8e8" stroke-width="1" stroke-dasharray="2 2"/>
<line x1="638" y1="108" x2="700" y2="134" stroke="#d8d8d8" stroke-width="1" stroke-dasharray="3 2"/>
<polygon points="678,266 684,262 737,286 734,293" fill="#b9b9b9" stroke="#8c8c8c" stroke-width="0.6" stroke-linejoin="round" />
<polygon points="625.8,203.4 653.8,198.5 676,197 662,276 612,281 619,245" fill="#9d9d9d" stroke="#7d7d7d" stroke-width="0.8" stroke-linejoin="round" />
<polygon points="632,206 660,200.5 684,208 672,280 652,285 634,286 622,280" fill="#a3a3a3" stroke="#6c6c6c" stroke-width="0.8" stroke-linejoin="round" />
<line x1="643" y1="207" x2="633" y2="280" stroke="#6a6a6a" stroke-width="8" />
<line x1="641" y1="207" x2="631" y2="280" stroke="#d2d2d2" stroke-width="1.2" stroke-dasharray="1.6 1.6"/>
<line x1="645.5" y1="207.5" x2="635.5" y2="280" stroke="#d2d2d2" stroke-width="1.2" stroke-dasharray="1.6 1.6"/>
<polygon points="646,213.5 654.5,215.5 646.5,285.5 633.5,283.5" fill="#ebebeb" stroke="#777" stroke-width="0.6" stroke-linejoin="round" />
<polygon points="636,262 648,263.5 646.5,285.5 633.5,283.5" fill="#d4d4d4" />
<polygon points="655,216 682.5,210 671.5,279 653.5,283" fill="#a2a2a2" />
<polygon points="655,216 661,214.8 655.5,282.5 649,284" fill="#8a8a8a" />
<path d="M646 212 L682.8 209 L671.2 279.7 L653.8 282.6 L658.6 257.5 L652 257.5 L650 284" fill="none" stroke="#4c4c4c" stroke-width="1.5" stroke-linejoin="round"/>
<path d="M646 212 L657 215.5 L682.8 209 M657 215.5 L651 258" fill="none" stroke="#5a5a5a" stroke-width="1" />
<line x1="676" y1="211" x2="666" y2="279" stroke="#c8c8c8" stroke-width="0.9" stroke-dasharray="1.6 1.6"/>
<polygon points="614.5,243.5 625.5,241.5 619.5,273.5 608,275.5" fill="#e2e2e2" />
<path d="M605.5 277.8 L612.2 241 L627.7 238.2 L621.9 274.9" fill="none" stroke="#505050" stroke-width="1.7" stroke-linejoin="round"/>
<path d="M609 276 L614.5 244.500 L624.5 242.700" fill="none" stroke="#8a8a8a" stroke-width="0.9" />
<line x1="618" y1="244" x2="612" y2="275" stroke="#b0b0b0" stroke-width="0.9" stroke-dasharray="1.6 1.6"/>
<polygon points="671.5,101.5 677,96.5 772,130.5 768,137.5 763,139.5" fill="#9c9c9c" stroke="#1e1e1e" stroke-width="1" stroke-linejoin="round" />
<line x1="675" y1="99.5" x2="769.5" y2="133" stroke="#e6e6e6" stroke-width="1.4" />
<line x1="673.5" y1="102" x2="767" y2="135.5" stroke="#2a2a2a" stroke-width="1.1" />
<line x1="672.5" y1="103.5" x2="765" y2="137.5" stroke="#c4c4c4" stroke-width="1" />
<polygon points="705.5,173 711,174.5 709,188.5 703.5,187" fill="#8fe3a0" stroke="#4c6a52" stroke-width="0.8" stroke-linejoin="round" />
<ellipse cx="701" cy="180.5" rx="1.4" ry="1.4" fill="#c04878" />
<polygon points="722,227 728,229 725,245 719.5,243" fill="#1fa640" stroke="#0c3a18" stroke-width="1.2" stroke-linejoin="round" />
<line x1="725" y1="229" x2="722.3" y2="243.5" stroke="#062a0e" stroke-width="1.6" stroke-dasharray="1.2 1.2"/>
<ellipse cx="731.5" cy="238.5" rx="1.7" ry="1.7" fill="#e0207a" />
<polygon points="766.4,209.7 773.8,207 812.6,220.7 802.4,223.5" fill="#8c8c12" stroke="#3a3a00" stroke-width="0.6" stroke-linejoin="round" />
<polygon points="802.4,223.5 812.6,220.7 806,261.3 795,264" fill="#6c6c0c" stroke="#3a3a00" stroke-width="0.6" stroke-linejoin="round" />
<polygon points="766.4,209.7 802.4,223.5 795,264 758,249.4" fill="#e9e9e9" stroke="#222" stroke-width="0.9" stroke-linejoin="round" />
<polygon points="773.3,215.5 795.3,223.3 792.3,238 770.8,230" fill="#111" />
<polygon points="775.6,217.6 793.4,224 791,235.6 773.3,229" fill="#f01010" />
<line x1="774" y1="216.5" x2="772" y2="229.5" stroke="#d8d020" stroke-width="1.2" />
<ellipse cx="766.5" cy="238.6" rx="1.9" ry="1.9" fill="#5a5a10" stroke="#222" stroke-width="0.6" />
<ellipse cx="764.8" cy="246.5" rx="1.9" ry="1.9" fill="#5a5a10" stroke="#222" stroke-width="0.6" />
<ellipse cx="772.8" cy="240.9" rx="1.9" ry="1.9" fill="#e02020" stroke="#222" stroke-width="0.6" />
<ellipse cx="771.1" cy="248.8" rx="1.9" ry="1.9" fill="#e8d820" stroke="#222" stroke-width="0.6" />
<ellipse cx="779.1" cy="243.2" rx="1.9" ry="1.9" fill="#e02020" stroke="#222" stroke-width="0.6" />
<ellipse cx="777.4" cy="251.1" rx="1.9" ry="1.9" fill="#e8d820" stroke="#222" stroke-width="0.6" />
<ellipse cx="785.4" cy="245.5" rx="1.9" ry="1.9" fill="#e02020" stroke="#222" stroke-width="0.6" />
<ellipse cx="783.7" cy="253.4" rx="1.9" ry="1.9" fill="#e8d820" stroke="#222" stroke-width="0.6" />
<ellipse cx="791.7" cy="247.8" rx="1.9" ry="1.9" fill="#e02020" stroke="#222" stroke-width="0.6" />
<ellipse cx="790" cy="255.7" rx="1.9" ry="1.9" fill="#e8d820" stroke="#222" stroke-width="0.6" />
<line x1="764" y1="235" x2="796" y2="247" stroke="#444" stroke-width="0.6" stroke-dasharray="1.5 1.5"/>
<line x1="761" y1="252" x2="793.5" y2="264.5" stroke="#444" stroke-width="0.6" stroke-dasharray="1.5 1.5"/>
<line x1="761.5" y1="207.5" x2="753.5" y2="246.5" stroke="#141414" stroke-width="3.6" />
<line x1="761.5" y1="207.5" x2="753.5" y2="246.5" stroke="#bdbdbd" stroke-width="1.1" />
<path d="M752 203.500 L763 207 L762 211.500 L751 208 Z" fill="#9a9a9a" stroke="#0e0e0e" stroke-width="1.3" />
<path d="M744 238.500 L755 242 L754 246.500 L743 243 Z" fill="#9a9a9a" stroke="#0e0e0e" stroke-width="1.3" />
<path d="M763 207 L766.500 209.500 M755 242 L758.500 249" fill="none" stroke="#0e0e0e" stroke-width="1.2" />
<path d="M735 325.500 L741.700 290 L756.700 287.600 L749.200 322.600" fill="none" stroke="#161616" stroke-width="2.4" stroke-linejoin="miter"/>
<polygon points="721.2,337 806,318 804,309.2 719.2,328.2" fill="#181818" />
<line x1="721.2" y1="337" x2="806" y2="318" stroke="#0a0a0a" stroke-width="1" />
<line x1="719.2" y1="328.2" x2="804" y2="309.2" stroke="#0a0a0a" stroke-width="1" />
<line x1="720.7" y1="334.8" x2="805.5" y2="315.8" stroke="#555" stroke-width="1.3235294117647058" stroke-dasharray="2 1.2"/>
<line x1="719.7" y1="330.4" x2="804.5" y2="311.4" stroke="#555" stroke-width="1.3235294117647058" stroke-dasharray="2 1.2"/>
<polygon points="760,138 839,127 840.4,136.9 761.4,147.9" fill="#181818" />
<line x1="760" y1="138" x2="839" y2="127" stroke="#0a0a0a" stroke-width="1" />
<line x1="761.4" y1="147.9" x2="840.4" y2="136.9" stroke="#0a0a0a" stroke-width="1" />
<line x1="760.3" y1="140.5" x2="839.3" y2="129.5" stroke="#555" stroke-width="1.4705882352941178" stroke-dasharray="2 1.2"/>
<line x1="761" y1="145.4" x2="840" y2="134.4" stroke="#555" stroke-width="1.4705882352941178" stroke-dasharray="2 1.2"/>
<polygon points="845.6,129 806,318 794.3,315.5 833.9,126.5" fill="#181818" />
<line x1="845.6" y1="129" x2="806" y2="318" stroke="#0a0a0a" stroke-width="1" />
<line x1="833.9" y1="126.5" x2="794.3" y2="315.5" stroke="#0a0a0a" stroke-width="1" />
<line x1="842.7" y1="128.4" x2="803.1" y2="317.4" stroke="#555" stroke-width="1.7647058823529411" stroke-dasharray="2 1.2"/>
<line x1="836.8" y1="127.2" x2="797.2" y2="316.2" stroke="#555" stroke-width="1.7647058823529411" stroke-dasharray="2 1.2"/>
<polygon points="750.5,146 762,138 765,151.5 753,152.5" fill="#161616" />
<polygon points="627.5,96 587,287 596.3,289 636.8,98" fill="#181818" />
<line x1="627.5" y1="96" x2="587" y2="287" stroke="#0a0a0a" stroke-width="1" />
<line x1="636.8" y1="98" x2="596.3" y2="289" stroke="#0a0a0a" stroke-width="1" />
<line x1="629.8" y1="96.5" x2="589.3" y2="287.5" stroke="#555" stroke-width="1.397058823529412" stroke-dasharray="2 1.2"/>
<line x1="634.5" y1="97.5" x2="594" y2="288.5" stroke="#555" stroke-width="1.397058823529412" stroke-dasharray="2 1.2"/>
<polygon points="627.5,94.5 761,137.5 757.8,147.5 624.3,104.5" fill="#181818" />
<line x1="627.5" y1="94.5" x2="761" y2="137.5" stroke="#0a0a0a" stroke-width="1" />
<line x1="624.3" y1="104.5" x2="757.8" y2="147.5" stroke="#0a0a0a" stroke-width="1" />
<line x1="626.7" y1="97" x2="760.2" y2="140" stroke="#555" stroke-width="1.5441176470588236" stroke-dasharray="2 1.2"/>
<line x1="625.1" y1="102" x2="758.6" y2="145" stroke="#555" stroke-width="1.5441176470588236" stroke-dasharray="2 1.2"/>
<polygon points="753,150 717,331 726.8,333 762.8,152" fill="#181818" />
<line x1="753" y1="150" x2="717" y2="331" stroke="#0a0a0a" stroke-width="1" />
<line x1="762.8" y1="152" x2="726.8" y2="333" stroke="#0a0a0a" stroke-width="1" />
<line x1="755.5" y1="150.5" x2="719.5" y2="331.5" stroke="#555" stroke-width="1.4705882352941178" stroke-dasharray="2 1.2"/>
<line x1="760.4" y1="151.5" x2="724.4" y2="332.5" stroke="#555" stroke-width="1.4705882352941178" stroke-dasharray="2 1.2"/>
<polygon points="587,288 722,337 725.1,328.5 590.1,279.5" fill="#181818" />
<line x1="587" y1="288" x2="722" y2="337" stroke="#0a0a0a" stroke-width="1" />
<line x1="590.1" y1="279.5" x2="725.1" y2="328.5" stroke="#0a0a0a" stroke-width="1" />
<line x1="587.8" y1="285.9" x2="722.8" y2="334.9" stroke="#555" stroke-width="1.3235294117647058" stroke-dasharray="2 1.2"/>
<line x1="589.3" y1="281.7" x2="724.3" y2="330.7" stroke="#555" stroke-width="1.3235294117647058" stroke-dasharray="2 1.2"/>
<polygon points="775.8,103.5 784,105 770.6,176 762.3,174.5" fill="#e03c40" stroke="#8a1c20" stroke-width="0.7" stroke-linejoin="round" />
<line x1="778.3" y1="105" x2="765.2" y2="174" stroke="#f07476" stroke-width="1.8" />
<ellipse cx="779.9" cy="104.2" rx="4.2" ry="1.4" fill="#f06a6c" stroke="#a02428" stroke-width="0.5" transform="rotate(10 779.9 104.2)" />
<ellipse cx="766.4" cy="177" rx="2.6" ry="1.6" fill="#ee5658" />
</svg>
<!-- view toolbar -->
<svg class="abs" style="left:735px;top:0" width="142" height="30" viewBox="735 0 142 30">
 <defs><linearGradient id="gL" x1="0" y1="0" x2="1" y2="1"><stop offset="0" stop-color="#ffffff"/><stop offset="1" stop-color="#c9d6e2"/></linearGradient>
 <linearGradient id="gT" x1="0" y1="0" x2="1" y2="1"><stop offset="0" stop-color="#ffffff"/><stop offset=".6" stop-color="#e2e2e2"/><stop offset="1" stop-color="#a8a8a8"/></linearGradient></defs>
 <!-- zoom to fit -->
 <path d="M750 17.500 L744 23" stroke="#5f9fcc" stroke-width="3.200" stroke-linecap="round"/>
 <circle cx="754.500" cy="12.500" r="6.300" fill="url(#gL)" stroke="#8a8f96" stroke-width="1.300"/>
 <path d="M754.500 8.200 L753 10 L756 10 Z M754.500 16.800 L753 15 L756 15 Z M750.200 12.500 L752 11 L752 14 Z M758.800 12.500 L757 11 L757 14 Z" fill="#666"/>
 <!-- zoom area -->
 <rect x="775" y="6.500" width="12" height="12" fill="none" stroke="#333" stroke-width="1" stroke-dasharray="2.500 1.500"/>
 <path d="M773.500 18.500 L769 23" stroke="#5f9fcc" stroke-width="3.200" stroke-linecap="round"/>
 <circle cx="777.500" cy="14" r="6.500" fill="url(#gL)" stroke="#8a8f96" stroke-width="1.300"/>
 <!-- previous view -->
 <g transform="translate(0,0)">
 <path d="M796 16.500 L803.500 11.500 L804.500 12.500 L808 9.800 L808.600 10.600 L811.500 7.500 L813.300 9.600 L810.800 12.800 L811.600 13.600 L808.500 17 L809.500 18 L802.500 24 Z" fill="url(#gT)" stroke="#777" stroke-width=".9" stroke-linejoin="round"/>
 <ellipse cx="799.300" cy="20.300" rx="2.700" ry="4.300" transform="rotate(-42 799.300 20.300)" fill="#ececec" stroke="#777" stroke-width=".8"/>
 <ellipse cx="799.300" cy="20.300" rx="1.300" ry="2.500" transform="rotate(-42 799.300 20.300)" fill="#cfcfcf" stroke="#999" stroke-width=".5"/>
 <path d="M813.500 19.400 L806.500 19.400" stroke="#4a90c0" stroke-width="2.400" fill="none"/>
 <path d="M803.600 19.400 L808 16 L808 22.800 Z" fill="#4a90c0"/>
 </g>
 <!-- section view -->
 <path d="M821.500 12 Q821.500 7 830 6.800 Q839 7 839 11 L839 19 Q836 17.500 834.300 20 L828 22 Q824 23.500 821.500 23 Z" fill="#e4e4e4" stroke="#6a6a6a" stroke-width=".9"/>
 <path d="M821.800 12.500 Q824.500 14 828 13 L828 22.600 Q824.500 23.600 821.800 22.600 Z" fill="#6fb4dc" stroke="#2a6a90" stroke-width=".8"/>
 <path d="M834.300 11.500 Q837 11.800 839 10.500 L839 19.500 Q837 20.300 834.300 20 Z" fill="#6fb4dc" stroke="#2a6a90" stroke-width=".8"/>
 <path d="M828 13 Q829 9.500 831.500 9.500 Q834 9.500 834.300 11.500 L834.300 20 L828 22 Z" fill="url(#gT)" stroke="#7a7a7a" stroke-width=".6"/>
 <path d="M822.500 17 L827 14.500 M822.500 20 L827 17.500 M823.500 22.300 L827.500 20 M835 15 L838.300 12.800 M835 18 L838.300 15.800" stroke="#d8eefa" stroke-width=".9"/>
 <!-- dynamic annotation -->
 <path d="M847.500 16.500 L855 11.500 L856 12.500 L859.500 9.800 L860.100 10.600 L862 7.500 L863.800 9.600 L861.300 12.800 L862.100 13.600 L859 17 L860 18 L853.500 23.800 Z" fill="url(#gT)" stroke="#777" stroke-width=".9" stroke-linejoin="round"/>
 <ellipse cx="850.500" cy="20.200" rx="2.700" ry="4.300" transform="rotate(-42 850.500 20.200)" fill="#ececec" stroke="#777" stroke-width=".8"/>
 <path d="M852 6 L858.500 6 L855.500 9.500 L858.500 9.500 L849 16.500 L852 11.800 L848.500 11.800 Z" fill="#f5b72a" stroke="#d0701a" stroke-width=".7" stroke-linejoin="round"/>
 <text x="856" y="23.600" font-family="Liberation Serif,serif" font-weight="bold" font-size="12" fill="#4a90c0">A</text>
 <!-- partial icon -->
 <path d="M873 11 L877 7 L877 11 Z" fill="#f4f4f4" stroke="#444" stroke-width=".8"/>
 <path d="M873 11 L877 11 L877 23.600 L873 23.600 Z" fill="#6fb4dc" stroke="#2a6a90" stroke-width=".8"/>
</svg>
<!-- top tabs -->
<div class="abs" style="left:168px;top:0;width:243px;height:26px;background:#f4f4f4;"></div>
<div class="abs tab" style="left:168px;width:56px;background:#f7f7f7;box-shadow:inset -1px -1px 0 #fff;">装配体</div>
<div class="abs tab" style="left:224px;width:56px;">布局</div>
<div class="abs tab" style="left:280px;width:56px;">草图</div>
<div class="abs tab" style="left:336px;width:56px;">标注</div>
<div class="abs tab" style="left:392px;width:56px;">评估</div>
<div class="abs tab" style="left:448px;width:117px;"><span style="position:absolute;left:8px;top:0;display:inline-block;transform:scaleX(.815);transform-origin:0 50%;">SOLIDWORKS</span><span style="position:absolute;left:83px;top:0;">插件</span></div>
<div class="abs tab" style="left:565px;width:56px;"><span style="display:inline-block;transform:scaleX(.86);">MBD</span></div>
<!-- panel -->
<div class="abs" style="left:168px;top:21px;width:242px;height:548px;background:#f7f7f7;"></div>
<div class="abs" style="left:410px;top:21px;width:1px;height:548px;background:#6e6e6e;"></div>
<div class="abs" style="left:411px;top:423px;width:7px;height:38px;background:#f6f6f6;border:1px solid #6e6e6e;border-left:none;"></div>
<div class="abs" style="left:410px;top:424px;width:1px;height:38px;background:#f7f7f7;"></div>
<div class="abs" style="left:411px;top:439px;width:5px;height:5px;border-radius:50%;background:#cfcfcf;border:1px solid #8a8a8a;"></div>
<div class="abs" style="left:168px;top:22px;width:242px;height:1px;background:#a3bfc5;"></div><div class="abs" style="left:168px;top:23px;width:242px;height:3px;background:#fbfbfb;"></div><div class="abs" style="left:168px;top:26px;width:240px;height:1px;background:#c4c4c4;"></div>
<div class="abs" style="left:168px;top:41px;width:240px;height:1px;background:#c4c4c4;"></div>
<div class="abs" style="left:285px;top:31px;width:5px;height:5px;border-radius:50%;background:#d8d8d8;border:1px solid #9a9a9a;"></div>
<!-- icon tabs -->
<div class="abs" style="left:169px;top:71px;width:239px;height:1px;background:#9c9c9c;"></div>
<div class="abs" style="left:169px;top:46px;width:41px;height:26px;background:#f8f8f8;border-top:1px solid #9c9c9c;box-sizing:border-box;"></div>
<div class="abs" style="left:210px;top:46px;width:160px;height:26px;background:#d5d5d5;border:1px solid #8c8c8c;box-sizing:border-box;"></div>
<div class="abs" style="left:250px;top:47px;width:1px;height:24px;background:#8c8c8c;"></div>
<div class="abs" style="left:290px;top:47px;width:1px;height:24px;background:#8c8c8c;"></div>
<div class="abs" style="left:330px;top:47px;width:1px;height:24px;background:#8c8c8c;"></div>
<svg class="abs" style="left:168px;top:44px" width="242" height="30" viewBox="168 44 242 30">
 <!-- assembly icon -->
 <path d="M182 57 L189 52 L198 56 L198 64 L190 68 L182 62 Z" fill="#f3c81e" stroke="#8a6a00" stroke-width="1"/>
 <path d="M182 57 L190 61 L198 56 M190 61 L190 68" fill="none" stroke="#8a6a00" stroke-width=".8"/>
 <path d="M187 53 L192 50 L199 53 L199 60 L193 63 L187 60 Z" fill="#6db9e0" stroke="#1f5f86" stroke-width="1"/>
 <path d="M187 53 L193 56 L199 53 M193 56 L193 63" fill="none" stroke="#1f5f86" stroke-width=".8"/>
 <!-- property icon -->
 <rect x="221.5" y="50.500" width="17" height="17" rx="1.500" fill="#fff" stroke="#222" stroke-width="1"/>
 <rect x="222" y="51" width="16" height="3" fill="#5aa6d6"/>
 <path d="M224 57.500 L227 57.500 M224 61 L227 61 M224 64.500 L227 64.500" stroke="#2d6f9e" stroke-width="2"/>
 <path d="M229 57.500 L236 57.500 M229 61 L236 61 M229 64.500 L236 64.500" stroke="#222" stroke-width="1.300"/>
 <!-- config icon -->
 <path d="M265.500 50 L265.500 68 M262 51 L265.500 51 M262 67.500 L265.500 67.500 M265.500 55 L270 55 M265.500 63.500 L272 63.500" fill="none" stroke="#222" stroke-width="1.400"/>
 <rect x="269" y="51" width="5" height="6" fill="#fff" stroke="#222" stroke-width="1"/>
 <rect x="271.500" y="60.500" width="5.500" height="6" fill="#fff" stroke="#222" stroke-width="1"/>
 <!-- crosshair -->
 <circle cx="310" cy="59" r="6" fill="none" stroke="#111" stroke-width="1.800"/>
 <path d="M300.500 59 L319.500 59 M310 49.500 L310 68.500" stroke="#111" stroke-width="1.800"/>
 <!-- ball -->
 <circle cx="350" cy="58" r="9" fill="#e8c21a"/>
 <path d="M341 58 A9 9 0 0 1 350 49 L350 58 Z" fill="#2c7fd0"/>
 <path d="M350 49 A9 9 0 0 1 359 58 L350 58 Z" fill="#d22a22"/>
 <path d="M341 58 A9 9 0 0 0 348 66.800 L350 58 Z" fill="#3aa53a"/>
 <ellipse cx="354.500" cy="54" rx="2.300" ry="4.200" transform="rotate(-28 354.500 54)" fill="#111"/>
 <circle cx="350" cy="58" r="9" fill="none" stroke="#7a6a30" stroke-width=".6"/>
 <path d="M395.500 53.500 L400 58 L395.500 62.500" fill="none" stroke="#6e6e6e" stroke-width="1.800"/>
</svg>
<!-- filter -->
<div class="abs" style="left:173px;top:72px;width:232px;height:25px;background:#f8f8f8;border:1px solid #c2c2c2;border-top:none;box-sizing:border-box;"></div>
<svg class="abs" style="left:174px;top:75px" width="26" height="22" viewBox="174 75 26 22">
 <path d="M177 79 L192 79 L186.500 87 L186.500 94.500 L183.500 93 L183.500 87 Z" fill="#f2f2f2" stroke="#222" stroke-width="1.100"/>
 <rect x="176.500" y="77" width="16" height="2.600" rx="1.200" fill="#4f9fd0" stroke="#1f5f86" stroke-width=".6"/>
 <path d="M194 88.500 L199 88.500 L196.500 91.500 Z" fill="#333"/>
</svg>
<!-- tree -->
<div class="abs" style="left:393px;top:98px;width:15px;height:471px;background:#efefef;"></div>
<div class="abs" style="left:393px;top:511px;width:15px;height:58px;background:#c9c9c9;"></div>
<svg class="abs" style="left:393px;top:100px" width="15" height="14"><path d="M3.500 9 L7.500 4.800 L11.500 9" fill="none" stroke="#444" stroke-width="1.500"/></svg>
<div class="abs" id="tree" style="left:168px;top:98px;width:225px;height:471px;overflow:hidden;">
<div class="tr" style="top:1px"><i class="arr" style="left:33px"></i><svg class="ic" width="21" height="20"><use href="#iFold"/><text x="10" y="15.500" font-family="Liberation Serif,serif" font-weight="bold" font-size="12" fill="#2f7fae" text-anchor="middle">A</text></svg><span class="t" style="left:73px">注解</span></div>
<div class="tr" style="top:23px"><svg class="ic" width="21" height="20"><use href="#iFold"/><circle cx="10" cy="11.500" r="4" fill="#fff" stroke="#222" stroke-width="1"/><path d="M10 11.500 L13 8.500" stroke="#d22" stroke-width="1.400"/><path d="M10 11.500 L7.500 9" stroke="#444" stroke-width=".8"/></svg><span class="t" style="left:73px">传感器</span></div>
<div class="tr" style="top:45px"><i class="arr" style="left:33px"></i><svg class="ic" width="21" height="20"><use href="#iFold"/><path d="M6.500 9 L10.500 7.500 L14 9 L14 14 L10 15.500 L6.500 14 Z" fill="#3f95c8" stroke="#14476a" stroke-width=".9"/><path d="M6.500 9 L10 10.500 L14 9 M10 10.500 L10 15.500" fill="none" stroke="#14476a" stroke-width=".8"/></svg><span class="t" style="left:73px">实体(1)</span></div>
<div class="tr" style="top:67px"><svg class="ic" style="top:-2.5px" width="21" height="22" viewBox="0 0 20 19"><use href="#iMat"/></svg><span class="t" style="left:73px">材质 <span style="padding:0 1.5px 0 .5px">&lt;</span>未指定<span style="padding:0 0 0 1.5px">&gt;</span></span></div>
<div class="tr" style="top:89px"><svg class="ic" style="left:50px;top:1px" width="21" height="20"><use href="#iPlane"/></svg><span class="t" style="left:73px">前视基准面</span></div>
<div class="tr" style="top:111px"><svg class="ic" style="left:50px;top:1px" width="21" height="20"><use href="#iPlane"/></svg><span class="t" style="left:73px">上视基准面</span></div>
<div class="tr" style="top:133px"><svg class="ic" style="left:50px;top:1px" width="21" height="20"><use href="#iPlane"/></svg><span class="t" style="left:73px">右视基准面</span></div>
<div class="tr" style="top:155px"><svg class="ic" style="left:49px;top:0px" width="22" height="21"><use href="#iOrigin"/></svg><span class="t" style="left:73px">原点</span></div>
<div class="tr" style="top:177px"><i class="arr" style="left:33px"></i><svg class="ic" width="21" height="20"><path d="M8 4.500 L15 2.500 L18 4 L18 14.500 L15 17.500 L8 16 Z" fill="#f3f3f3" stroke="#333" stroke-width="1"/><path d="M2 7 L9 5 L13 6.500 L13 15 L9 17.500 L2 15.500 Z" fill="#4aa0d0" stroke="#14476a" stroke-width="1"/><path d="M2 7 L6.500 8.500 L13 6.500 M6.500 8.500 L6.500 17" fill="none" stroke="#14476a" stroke-width=".8"/></svg><span class="t" style="left:73px">拉伸1</span></div>
<div class="tr" style="top:199px"><i class="arr" style="left:33px"></i><svg class="ic" width="21" height="20"><path d="M3.500 4 Q3.500 2.500 5 2.500 L16 2.500 Q17.500 2.500 17.500 4 L17.500 16 Q17.500 17.500 16 17.500 L5 17.500 Q3.500 17.500 3.500 16 Z" fill="#ececec" stroke="#444" stroke-width="1"/><path d="M6 5 L15 5 L15 15 L6 15 Z" fill="#fff" stroke="#444" stroke-width=".9"/><rect x="8.500" y="7" width="5.500" height="6.500" fill="#5ab0dd" stroke="#14476a" stroke-width="1"/></svg><span class="t" style="left:73px">切除<span style="padding:0 .8px">-</span>拉伸1</span></div>
<div class="tr" style="top:221px"><i class="arrd" style="left:9px"></i><svg class="ic" style="left:26px;top:0" width="22" height="21"><path d="M2 8 L7 5.500 L7 2.500 L10.500 1 L15 3 L15 8.500 L19.500 10.500 L19.500 15 L13.500 18.500 L2 13 Z" fill="#f4c623" stroke="#8a6400" stroke-width="1"/><path d="M2 8 L13.500 13.500 L19.500 10.500 M13.500 13.500 L13.500 18.500 M7 5.500 L11 7.300 L15 5.500 M11 7.300 L11 12.200" fill="none" stroke="#8a6400" stroke-width=".8"/></svg><span class="t" style="left:49.5px;word-spacing:1px">(-) 送料工站</span><span class="t" style="left:114.5px;letter-spacing:.5px">017</span><span class="t" style="left:136.5px;letter-spacing:1.3px">&lt;5&gt;</span><span class="t" style="left:165.6px">(默认</span><span class="t" style="left:194.5px;letter-spacing:1.4px">&lt;&lt;</span><span class="t" style="left:211px">默</span></div>
<div class="tr" style="top:243px"><i class="arr" style="left:33px"></i><svg class="ic" width="21" height="20"><use href="#iFold"/><path d="M7.500 9.500 L11.500 13.500 Q13 15 14 13.800 Q15 12.500 13.500 11.200 L10 8 Q8.800 7 8 8 Q7 9 8.300 10.200 L11.500 13" fill="none" stroke="#2f7fae" stroke-width="1.100"/></svg><span class="t" style="left:73px">凸轮压入裁切机 中的配合</span></div>
<div class="tr" style="top:265px"><svg class="ic" width="21" height="20"><use href="#iFold"/><circle cx="10.500" cy="11.500" r="3.800" fill="#fff" stroke="#222" stroke-width="1"/><path d="M10.500 9.500 L10.500 11.700 L12.300 12.500" fill="none" stroke="#222" stroke-width=".9"/><path d="M4.500 12 L7.500 10 L7.500 14 Z" fill="#2f7fae"/></svg><span class="t" style="left:73px">历史记录</span></div>
<div class="tr" style="top:287px"><i class="arr" style="left:33px"></i><svg class="ic" width="21" height="20"><use href="#iFold"/><text x="10" y="15.500" font-family="Liberation Serif,serif" font-weight="bold" font-size="12" fill="#2f7fae" text-anchor="middle">A</text></svg><span class="t" style="left:73px">注解</span></div>
<div class="tr" style="top:309px"><svg class="ic" width="21" height="20"><use href="#iFold"/><circle cx="10" cy="11.500" r="4" fill="#fff" stroke="#222" stroke-width="1"/><path d="M10 11.500 L13 8.500" stroke="#d22" stroke-width="1.400"/><path d="M10 11.500 L7.500 9" stroke="#444" stroke-width=".8"/></svg><span class="t" style="left:73px">传感器</span></div>
<div class="tr" style="top:331px"><i class="arr" style="left:33px"></i><svg class="ic" width="21" height="20"><use href="#iFold"/><path d="M6.500 9 L10.500 7.500 L14 9 L14 14 L10 15.500 L6.500 14 Z" fill="#3f95c8" stroke="#14476a" stroke-width=".9"/><path d="M6.500 9 L10 10.500 L14 9 M10 10.500 L10 15.500" fill="none" stroke="#14476a" stroke-width=".8"/></svg><span class="t" style="left:73px">实体(1)</span></div>
<div class="tr" style="top:353px"><svg class="ic" style="top:-2.5px" width="21" height="22" viewBox="0 0 20 19"><use href="#iMat"/></svg><span class="t" style="left:73px">材质 <span style="padding:0 1.5px 0 .5px">&lt;</span>未指定<span style="padding:0 0 0 1.5px">&gt;</span></span></div>
<div class="tr" style="top:375px"><svg class="ic" style="left:50px;top:1px" width="21" height="20"><use href="#iPlane"/></svg><span class="t" style="left:73px">前视基准面</span></div>
<div class="tr" style="top:397px"><svg class="ic" style="left:50px;top:1px" width="21" height="20"><use href="#iPlane"/></svg><span class="t" style="left:73px">上视基准面</span></div>
<div class="tr" style="top:419px"><svg class="ic" style="left:50px;top:1px" width="21" height="20"><use href="#iPlane"/></svg><span class="t" style="left:73px">右视基准面</span></div>
<div class="tr" style="top:441px"><svg class="ic" style="left:49px;top:0px" width="22" height="21"><use href="#iOrigin"/></svg><span class="t" style="left:73px">原点</span></div>
<div class="tr" style="top:463px"><i class="arr" style="left:33px"></i><svg class="ic" width="21" height="20"><path d="M8 4.500 L15 2.500 L18 4 L18 14.500 L15 17.500 L8 16 Z" fill="#f3f3f3" stroke="#333" stroke-width="1"/><path d="M2 7 L9 5 L13 6.500 L13 15 L9 17.500 L2 15.500 Z" fill="#4aa0d0" stroke="#14476a" stroke-width="1"/><path d="M2 7 L6.500 8.500 L13 6.500 M6.500 8.500 L6.500 17" fill="none" stroke="#14476a" stroke-width=".8"/></svg><span class="t" style="left:73px">拉伸1</span></div>
</div>

</div>
<div class="abs" style="left:167px;top:0;width:1px;height:569px;background:#2f86d8;"></div>
<svg class="abs" style="left:158px;top:0" width="9" height="6"><path d="M1 4.500 L7 0.500 M4 0 L8 0 L8 3" stroke="#222" stroke-width="1.200" fill="none"/></svg>
</body>
</html>
